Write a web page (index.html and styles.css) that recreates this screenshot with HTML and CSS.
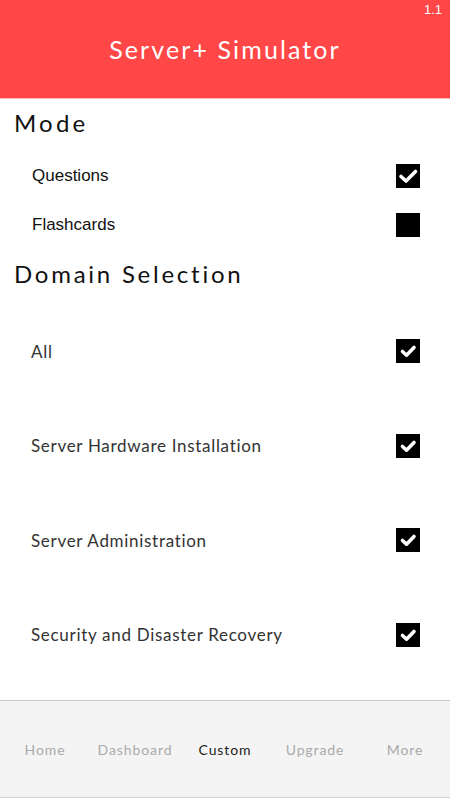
FILE: index.html
```html
<!DOCTYPE html>
<html>
<head>
<meta charset="utf-8">
<link rel="stylesheet" href="styles.css">
</head>
<body>
<div class="app">
  <header class="topbar">
    <span class="version">1.1</span>
    <h1 class="title">Server+ Simulator</h1>
  </header>
  <main class="content">
    <h2 class="section-title mode-title">Mode</h2>
    <div class="mode-row"><span class="mode-label">Questions</span><span class="box checked"><svg viewBox="0 0 24 24" width="24" height="24"><path d="M5 12.5 L10 17 L19.5 7.5" fill="none" stroke="#fff" stroke-width="3.6" stroke-linecap="round" stroke-linejoin="round"/></svg></span></div>
    <div class="mode-row"><span class="mode-label">Flashcards</span><span class="box"></span></div>
    <h2 class="section-title domain-title">Domain Selection</h2>
    <div class="domain-row"><span class="domain-label">All</span><span class="box checked small"><svg viewBox="0 0 24 24" width="24" height="24"><path d="M6.5 12.5 L10.5 16.2 L18 8.5" fill="none" stroke="#fff" stroke-width="3.6" stroke-linecap="round" stroke-linejoin="round"/></svg></span></div>
    <div class="domain-row"><span class="domain-label">Server Hardware Installation</span><span class="box checked small"><svg viewBox="0 0 24 24" width="24" height="24"><path d="M6.5 12.5 L10.5 16.2 L18 8.5" fill="none" stroke="#fff" stroke-width="3.6" stroke-linecap="round" stroke-linejoin="round"/></svg></span></div>
    <div class="domain-row"><span class="domain-label">Server Administration</span><span class="box checked small"><svg viewBox="0 0 24 24" width="24" height="24"><path d="M6.5 12.5 L10.5 16.2 L18 8.5" fill="none" stroke="#fff" stroke-width="3.6" stroke-linecap="round" stroke-linejoin="round"/></svg></span></div>
    <div class="domain-row"><span class="domain-label">Security and Disaster Recovery</span><span class="box checked small"><svg viewBox="0 0 24 24" width="24" height="24"><path d="M6.5 12.5 L10.5 16.2 L18 8.5" fill="none" stroke="#fff" stroke-width="3.6" stroke-linecap="round" stroke-linejoin="round"/></svg></span></div>
  </main>
  <nav class="tabbar">
    <span class="tab">Home</span>
    <span class="tab">Dashboard</span>
    <span class="tab active">Custom</span>
    <span class="tab">Upgrade</span>
    <span class="tab">More</span>
  </nav>
</div>
</body>
</html>
```
FILE: styles.css
```css
* { box-sizing: border-box; }
html, body { margin: 0; padding: 0; background: #fff; }
body { font-family: "Lato", "DejaVu Sans", sans-serif; }
.app { display: flex; flex-direction: column; height: 800px; width: 450px; }
.topbar {
  position: relative;
  height: 99px;
  background: #ff4747;
  border-bottom: 1px solid #ffb5b5;
  display: flex; align-items: center; justify-content: center;
}
.version {
  position: absolute; right: 8px; top: 2px;
  color: #fff; font-family: "Liberation Sans", sans-serif; font-size: 13px;
}
.title {
  margin: 0; color: #fff; font-weight: 400;
  font-size: 25px; letter-spacing: 2.1px;
}
.content { flex: 1; }
.section-title {
  margin: 0; padding-left: 14px;
  font-weight: 400; font-size: 24px; line-height: 32px;
  color: #111;
  margin-top: 8px;
}
.mode-title { letter-spacing: 3.2px; }
.domain-title { margin-top: 9px; margin-bottom: 14px; letter-spacing: 2.75px; }
.mode-row {
  height: 49px; display: flex; align-items: center; justify-content: space-between;
  padding: 0 30px 0 32px;
}
.section-title + .mode-row { margin-top: 12px; }
.mode-label { font-family: "Liberation Sans", Arial, sans-serif; font-size: 17px; color: #111; }
.domain-row {
  height: 94.5px; display: flex; align-items: center; justify-content: space-between;
  padding: 0 30px 0 31px;
}
.domain-label { font-size: 17px; color: #333; letter-spacing: 0.7px; }
.box { width: 24px; height: 24px; background: #000; display: block; }
.box svg { display: block; }
.tabbar {
  height: 98px; background: #f4f4f4;
  border-top: 1px solid #c8c8c8; border-bottom: 1px solid #d0d0d0;
  display: grid; grid-template-columns: repeat(5, 1fr); align-items: center;
  margin-bottom: 2px;
}
.tab { text-align: center; font-size: 14px; color: #aaa; letter-spacing: 0.9px; }
.tab.active { color: #222; }
```
